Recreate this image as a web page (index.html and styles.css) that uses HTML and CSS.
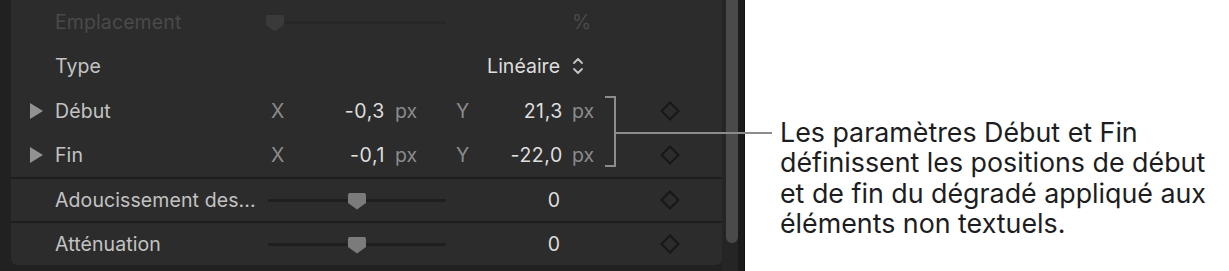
FILE: index.html
```html
<!DOCTYPE html>
<html lang="fr">
<head>
<meta charset="utf-8">
<link rel="stylesheet" href="styles.css">
</head>
<body>
<div class="page">
  <div class="app">
    <div class="gutter"></div>
    <div class="panel">
      <div class="row row-h44 dim">
        <div class="twist"></div>
        <div class="label">Emplacement</div>
        <div class="ctrl">
          <div class="slider slider-dim">
            <span class="thumb thumb-dim thumb-start"></span>
            <span class="track track-rest"></span>
          </div>
        </div>
        <div class="unit">%</div>
        <div class="key"></div>
      </div>
      <div class="row row-h44">
        <div class="twist"></div>
        <div class="label">Type</div>
        <div class="ctrl ctrl-right"><span class="value">Linéaire</span></div>
        <div class="unit">
          <svg class="updown" width="12" height="20" viewBox="0 0 12 20"><path d="M2 7 L6 3 L10 7" fill="none" stroke="#c4c4c4" stroke-width="1.8" stroke-linecap="round" stroke-linejoin="round"/><path d="M2 13 L6 17 L10 13" fill="none" stroke="#c4c4c4" stroke-width="1.8" stroke-linecap="round" stroke-linejoin="round"/></svg>
        </div>
        <div class="key"></div>
      </div>
      <div class="row row-h45">
        <div class="twist"><svg width="13" height="16" viewBox="0 0 13 16"><path d="M0 0 L13 8 L0 16 Z" fill="#929292"/></svg></div>
        <div class="label">Début</div>
        <div class="ctrl xy">
          <span class="axis">X</span>
          <span class="value num">-0,3</span>
          <span class="px">px</span>
          <span class="axis">Y</span>
          <span class="value num">21,3</span>
        </div>
        <div class="unit px">px</div>
        <div class="key"><span class="diamond"></span></div>
      </div>
      <div class="row row-h44 sep">
        <div class="twist"><svg width="13" height="16" viewBox="0 0 13 16"><path d="M0 0 L13 8 L0 16 Z" fill="#929292"/></svg></div>
        <div class="label">Fin</div>
        <div class="ctrl xy">
          <span class="axis">X</span>
          <span class="value num">-0,1</span>
          <span class="px">px</span>
          <span class="axis">Y</span>
          <span class="value num">-22,0</span>
        </div>
        <div class="unit px">px</div>
        <div class="key"><span class="diamond"></span></div>
      </div>
      <div class="row row-h42 sep">
        <div class="twist"></div>
        <div class="label">Adoucissement des...</div>
        <div class="ctrl ctrl-split">
          <div class="slider">
            <span class="track track-left"></span>
            <span class="thumb"></span>
            <span class="track track-rest"></span>
          </div>
          <span class="value">0</span>
        </div>
        <div class="unit"></div>
        <div class="key"><span class="diamond"></span></div>
      </div>
      <div class="row row-h42">
        <div class="twist"></div>
        <div class="label">Atténuation</div>
        <div class="ctrl ctrl-split">
          <div class="slider">
            <span class="track track-left"></span>
            <span class="thumb"></span>
            <span class="track track-rest"></span>
          </div>
          <span class="value">0</span>
        </div>
        <div class="unit"></div>
        <div class="key"><span class="diamond"></span></div>
      </div>
    </div>
    <div class="scroll"><div class="scroll-thumb"></div></div>
    <div class="scroll-edge"></div>
  </div>
  <div class="note">
    <p>Les paramètres Début et Fin définissent les positions de début et de fin du dégradé appliqué aux éléments non textuels.</p>
  </div>
  <div class="callout">
    <span class="br-top"></span>
    <span class="br-vert"></span>
    <span class="br-bot"></span>
    <span class="br-line"></span>
  </div>
</div>
</body>
</html>
```
FILE: styles.css
```css
* { box-sizing: border-box; }
html, body { margin: 0; padding: 0; background: #ffffff; }
body { font-family: Inter, "Noto Sans", "Liberation Sans", sans-serif; }

.page {
  position: relative;
  display: flex;
  width: 1229px;
  height: 271px;
  overflow: hidden;
}

.app {
  display: flex;
  width: 745px;
  height: 271px;
  background: #212121;
  flex: none;
}
.gutter { width: 11px; flex: none; }

.panel {
  width: 711px;
  height: 265px;
  background: #2c2c2c;
  border-radius: 0 0 6px 6px;
  flex: none;
  display: flex;
  flex-direction: column;
}

.row {
  display: grid;
  grid-template-columns: 25px 213px 293px 44px 117px;
  align-items: center;
  padding-left: 19px;
  font-size: 19.5px;
  color: #c3c3c3;
}
.row-h44 { height: 44px; }
.row-h45 { height: 45px; }
.row-h42 { height: 42px; }
.row.sep { border-bottom: 2px solid #1e1e1e; }
.row-h44.sep { height: 46px; }
.row-h42.sep { height: 44px; }

.twist { display: flex; align-items: center; }
.label { white-space: nowrap; letter-spacing: 0.1px; }
.dim .label, .dim .unit { color: #4a4a4a; }

.ctrl { display: flex; align-items: center; height: 100%; }
.ctrl-right { justify-content: flex-end; }
.ctrl-split { justify-content: space-between; }
.value { color: #dedede; padding-right: 1px; }
.num { letter-spacing: 0.6px; }

.xy {
  display: grid;
  grid-template-columns: 23px 92px 70px 20px 88px;
  padding-left: 3px;
  align-items: center;
}
.xy .axis { color: #8b8b8b; }
.xy .num { text-align: right; }
.xy .px { padding-left: 9px; }
.px { color: #8b8b8b; }

.unit { padding-left: 11px; display: flex; align-items: center; }
.updown { display: block; }

.key { display: flex; align-items: center; padding-left: 56px; }
.diamond {
  display: block;
  width: 14px;
  height: 14px;
  margin-left: 2px;
  border: 2px solid #171717;
  transform: rotate(45deg);
}

.slider {
  display: flex;
  align-items: center;
  width: 178px;
  height: 20px;
}
.slider-dim { width: 180px; margin-left: -2px; }
.track { height: 3px; background: #1f1f1f; border-radius: 2px; }
.track-left { width: 80px; }
.track-rest { flex: 1; }
.slider-dim .track { background: #272727; }
.thumb {
  width: 18px;
  height: 17px;
  flex: none;
  background: #7b7b7b;
  clip-path: polygon(0 15%, 4% 4%, 15% 0, 85% 0, 96% 4%, 100% 15%, 100% 62%, 50% 100%, 0 62%);
  margin-top: 2px;
}
.thumb-dim { background: #3a3a3a; }

.scroll {
  width: 16px;
  flex: none;
  background: #252525;
  padding-left: 4px;
}
.scroll-thumb {
  width: 12px;
  height: 243px;
  background: #4a4a4a;
  border-radius: 0 0 6px 6px;
}
.scroll-edge { width: 7px; flex: none; background: #1b1b1b; border-right: 1px solid #111; }

.note {
  padding-left: 35px;
  padding-top: 117px;
  flex: 1;
}
.note p {
  margin: 0;
  font-size: 26.8px;
  line-height: 30.4px;
  color: #1d1d1f;
  width: 450px;
}

.callout span { position: absolute; background: #8c8c8c; }
.br-top { left: 605px; top: 96px; width: 11px; height: 2px; }
.br-vert { left: 614px; top: 96px; width: 2px; height: 71px; }
.br-bot { left: 605px; top: 165px; width: 11px; height: 2px; }
.br-line { left: 614px; top: 132px; width: 158px; height: 2px; }
```
